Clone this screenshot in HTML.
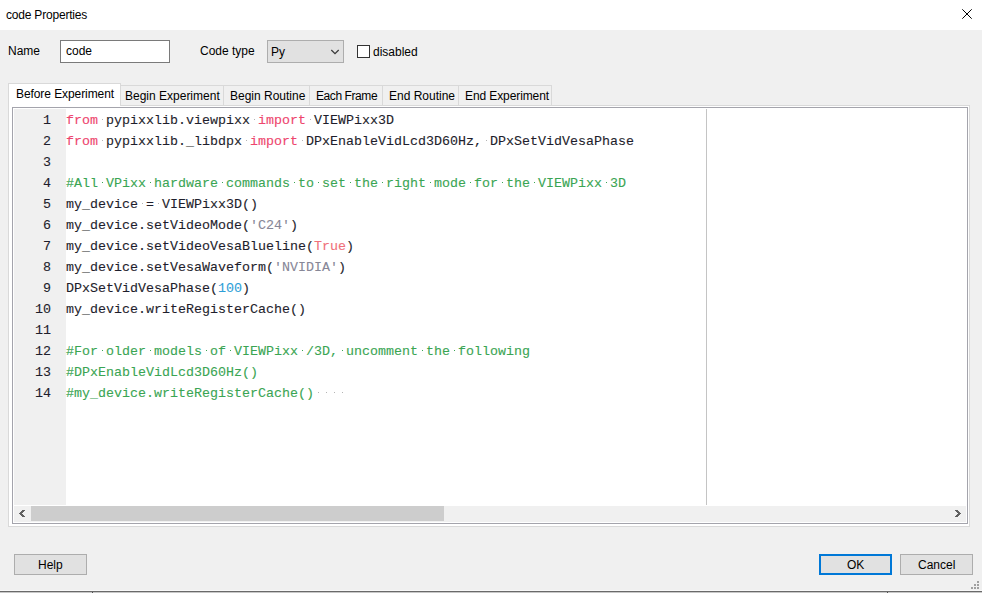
<!DOCTYPE html>
<html><head><meta charset="utf-8">
<style>
html,body{margin:0;padding:0;}
body{width:982px;height:593px;position:relative;overflow:hidden;background:#f0f0f0;font-family:"Liberation Sans",sans-serif;font-size:12px;color:#000;}
.a{position:absolute;}
.txt{position:absolute;white-space:pre;line-height:14px;height:14px;}
#title{left:0;top:0;width:982px;height:30px;background:#fff;}
.box{position:absolute;box-sizing:border-box;}
.ln{-webkit-text-stroke:0.1px currentColor;position:absolute;left:66px;height:21px;line-height:21px;font-family:"Liberation Mono",monospace;font-size:13.333px;white-space:pre;color:#1e1e2c;}
.num{-webkit-text-stroke:0.1px currentColor;position:absolute;left:14px;width:37px;text-align:right;height:21px;line-height:21px;font-family:"Liberation Mono",monospace;font-size:13.333px;color:#1e1e2c;}
.kw{color:#ee456d;}
.tr{color:#f0707a;}
.st{color:#878797;}
.nm{color:#2d9fd8;}
.cm{color:#3aa553;}
.sp{display:inline-block;width:8px;height:21px;vertical-align:top;position:relative;}
.sp i{position:absolute;left:4px;top:9px;width:1px;height:1px;}
.ws i{background:#b4b4b4;}
.cd i{background:#3aa553;}
.dot{position:absolute;width:2px;height:2px;background:#a0a0a0;}
</style></head><body>
<div id="title" class="a"></div>
<div class="txt" style="left:6px;top:8px;letter-spacing:-0.2px">code Properties</div>
<svg class="a" style="left:960px;top:7px" width="14" height="14" viewBox="0 0 14 14"><path d="M2.3 2.3 L11.7 11.7 M11.7 2.3 L2.3 11.7" stroke="#000" stroke-width="1" fill="none"/></svg>

<div class="txt" style="left:8px;top:44px;">Name</div>
<div class="box" style="left:60px;top:40px;width:110px;height:23px;border:1px solid #7a7a7a;background:#fff;"></div>
<div class="txt" style="left:66px;top:44px;">code</div>

<div class="txt" style="left:200px;top:44px;">Code type</div>
<div class="box" style="left:267px;top:40px;width:77px;height:23px;border:1px solid #adadad;background:#e1e1e1;"></div>
<div class="txt" style="left:271px;top:45px;">Py</div>
<svg class="a" style="left:326px;top:44px" width="18" height="16" viewBox="0 0 18 16"><path d="M5.3 6 L9 9.6 L12.7 6" stroke="#3a3a3a" stroke-width="1.3" fill="none"/></svg>
<div class="box" style="left:357px;top:45px;width:13px;height:13px;border:1px solid #333;background:#fff;"></div>
<div class="txt" style="left:373px;top:45px;">disabled</div>

<!-- tabs -->
<div class="box" style="left:8px;top:105px;width:962px;height:422px;border:1px solid #d9d9d9;background:#fff;"></div>
<div class="box" style="left:120px;top:85px;width:104px;height:20px;border:1px solid #d9d9d9;border-bottom:none;background:#f0f0f0;"></div>
<div class="box" style="left:223px;top:85px;width:87px;height:20px;border:1px solid #d9d9d9;border-bottom:none;background:#f0f0f0;"></div>
<div class="box" style="left:309px;top:85px;width:74px;height:20px;border:1px solid #d9d9d9;border-bottom:none;background:#f0f0f0;"></div>
<div class="box" style="left:382px;top:85px;width:77px;height:20px;border:1px solid #d9d9d9;border-bottom:none;background:#f0f0f0;"></div>
<div class="box" style="left:458px;top:85px;width:94px;height:20px;border:1px solid #d9d9d9;border-bottom:none;background:#f0f0f0;"></div>
<div class="box" style="left:8px;top:83px;width:113px;height:23px;border:1px solid #d9d9d9;border-bottom:none;background:#fff;"></div>
<div class="txt" style="left:16px;top:87px;letter-spacing:-0.08px">Before Experiment</div>
<div class="txt" style="left:125px;top:89px;">Begin Experiment</div>
<div class="txt" style="left:230px;top:89px;">Begin Routine</div>
<div class="txt" style="left:316px;top:89px;letter-spacing:-0.42px">Each Frame</div>
<div class="txt" style="left:389px;top:89px;">End Routine</div>
<div class="txt" style="left:465px;top:89px;letter-spacing:-0.1px">End Experiment</div>

<!-- editor -->
<div class="box" style="left:12px;top:107px;width:956px;height:417px;border:1px solid #a4a4ac;background:#fff;"></div>
<div class="a" style="left:14px;top:109px;width:52px;height:396px;background:#f0f0f0;"></div>
<div class="a" style="left:706px;top:109px;width:1px;height:396px;background:#c4c4c4;"></div>
<div class="ln" style="top:110px"><span class="kw">from</span><span class="sp ws"><i></i></span><span class="t">pypixxlib.viewpixx</span><span class="sp ws"><i></i></span><span class="kw">import</span><span class="sp ws"><i></i></span><span class="t">VIEWPixx3D</span></div>
<div class="num" style="top:110px">1</div>
<div class="ln" style="top:131px"><span class="kw">from</span><span class="sp ws"><i></i></span><span class="t">pypixxlib._libdpx</span><span class="sp ws"><i></i></span><span class="kw">import</span><span class="sp ws"><i></i></span><span class="t">DPxEnableVidLcd3D60Hz,</span><span class="sp ws"><i></i></span><span class="t">DPxSetVidVesaPhase</span></div>
<div class="num" style="top:131px">2</div>
<div class="ln" style="top:152px"></div>
<div class="num" style="top:152px">3</div>
<div class="ln" style="top:173px"><span class="cm">#All<span class="sp cd"><i></i></span>VPixx<span class="sp cd"><i></i></span>hardware<span class="sp cd"><i></i></span>commands<span class="sp cd"><i></i></span>to<span class="sp cd"><i></i></span>set<span class="sp cd"><i></i></span>the<span class="sp cd"><i></i></span>right<span class="sp cd"><i></i></span>mode<span class="sp cd"><i></i></span>for<span class="sp cd"><i></i></span>the<span class="sp cd"><i></i></span>VIEWPixx<span class="sp cd"><i></i></span>3D</span></div>
<div class="num" style="top:173px">4</div>
<div class="ln" style="top:194px"><span class="t">my_device</span><span class="sp ws"><i></i></span><span class="t">=</span><span class="sp ws"><i></i></span><span class="t">VIEWPixx3D()</span></div>
<div class="num" style="top:194px">5</div>
<div class="ln" style="top:215px"><span class="t">my_device.setVideoMode(</span><span class="st">&#x27;C24&#x27;</span><span class="t">)</span></div>
<div class="num" style="top:215px">6</div>
<div class="ln" style="top:236px"><span class="t">my_device.setVideoVesaBlueline(</span><span class="tr">True</span><span class="t">)</span></div>
<div class="num" style="top:236px">7</div>
<div class="ln" style="top:257px"><span class="t">my_device.setVesaWaveform(</span><span class="st">&#x27;NVIDIA&#x27;</span><span class="t">)</span></div>
<div class="num" style="top:257px">8</div>
<div class="ln" style="top:278px"><span class="t">DPxSetVidVesaPhase(</span><span class="nm">100</span><span class="t">)</span></div>
<div class="num" style="top:278px">9</div>
<div class="ln" style="top:299px"><span class="t">my_device.writeRegisterCache()</span></div>
<div class="num" style="top:299px">10</div>
<div class="ln" style="top:320px"></div>
<div class="num" style="top:320px">11</div>
<div class="ln" style="top:341px"><span class="cm">#For<span class="sp cd"><i></i></span>older<span class="sp cd"><i></i></span>models<span class="sp cd"><i></i></span>of<span class="sp cd"><i></i></span>VIEWPixx<span class="sp cd"><i></i></span>/3D,<span class="sp cd"><i></i></span>uncomment<span class="sp cd"><i></i></span>the<span class="sp cd"><i></i></span>following</span></div>
<div class="num" style="top:341px">12</div>
<div class="ln" style="top:362px"><span class="cm">#DPxEnableVidLcd3D60Hz()</span></div>
<div class="num" style="top:362px">13</div>
<div class="ln" style="top:383px"><span class="cm">#my_device.writeRegisterCache()</span><span class="sp ws"><i></i></span><span class="sp ws"><i></i></span><span class="sp ws"><i></i></span><span class="sp ws"><i></i></span></div>
<div class="num" style="top:383px">14</div>

<!-- scrollbar -->
<div class="a" style="left:14px;top:506px;width:952px;height:16px;background:#f0f0f0;"></div>
<div class="a" style="left:31px;top:506px;width:413px;height:15px;background:#cdcdcd;"></div>
<svg class="a" style="left:14px;top:506px" width="16" height="16" viewBox="14 506 16 16" shape-rendering="crispEdges"><path d="M22 510h3v1h-3zM21 511h3v1h-3zM20 512h3v1h-3zM19 513h3v1h-3zM20 514h3v1h-3zM21 515h3v1h-3zM22 516h3v1h-3z" fill="#606060"/></svg>
<svg class="a" style="left:950px;top:506px" width="16" height="16" viewBox="950 506 16 16" shape-rendering="crispEdges"><path d="M955 510h3v1h-3zM956 511h3v1h-3zM957 512h3v1h-3zM958 513h3v1h-3zM957 514h3v1h-3zM956 515h3v1h-3zM955 516h3v1h-3z" fill="#606060"/></svg>

<!-- buttons -->
<div class="box" style="left:14px;top:554px;width:73px;height:21px;border:1px solid #adadad;background:#e1e1e1;"></div>
<div class="txt" style="left:38px;top:558px;">Help</div>
<div class="box" style="left:819px;top:554px;width:73px;height:21px;border:2px solid #0078d7;background:#e1e1e1;"></div>
<div class="txt" style="left:847px;top:558px;">OK</div>
<div class="box" style="left:900px;top:554px;width:73px;height:21px;border:1px solid #adadad;background:#e1e1e1;"></div>
<div class="txt" style="left:918px;top:558px;">Cancel</div>

<div class="dot" style="left:977px;top:581px"></div>
<div class="dot" style="left:974px;top:584px"></div><div class="dot" style="left:977px;top:584px"></div>
<div class="dot" style="left:971px;top:587px"></div><div class="dot" style="left:974px;top:587px"></div><div class="dot" style="left:977px;top:587px"></div>

<div class="a" style="left:0;top:590px;width:982px;height:1px;background:#f8f8f8;"></div>
<div class="a" style="left:0;top:591px;width:982px;height:1px;background:#6a6a6a;"></div>
<div class="a" style="left:0;top:592px;width:982px;height:1px;background:#c8c8c8;"></div>
<div class="a" style="left:92px;top:592px;width:1px;height:1px;background:#505050;"></div>
<div class="a" style="left:887px;top:592px;width:1px;height:1px;background:#505050;"></div>
</body></html>
